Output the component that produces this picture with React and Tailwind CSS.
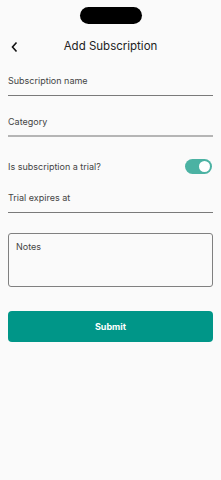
import { useState } from "react";

const label = "block text-[9px] leading-[13px] text-[#444]";

export default function App() {
  const [trial, setTrial] = useState(true);

  return (
    <div
      className="w-[221px] h-[480px] bg-[#fafafa] flex flex-col"
      style={{ fontFamily: "Inter, 'Noto Sans', sans-serif" }}
    >
      <div className="flex justify-center pt-[7px]">
        <div className="w-[62px] h-[17px] rounded-full bg-black" />
      </div>

      <div className="relative flex items-center justify-center h-[20px] mt-[13px]">
        <svg
          className="absolute left-[10px] top-[4px]"
          width="9"
          height="12"
          viewBox="0 0 9 12"
          fill="none"
          stroke="#111"
          strokeWidth="1.6"
        >
          <path d="M6.5 1.5 L2.5 6 L6.5 10.5" />
        </svg>
        <h1 className="text-[11.5px] text-[#222]">Add Subscription</h1>
      </div>

      <div className="mx-2 pt-[17px] h-[39px] border-b border-[#7a7a7a]">
        <span className={label}>Subscription name</span>
      </div>
      <div className="mx-2 pt-[19px] h-[41px] border-b-2 border-[#b5b5b5]">
        <span className={label}>Category</span>
      </div>

      <div className="mx-2 mt-[22px] h-[15px] flex items-center justify-between">
        <span className={label}>Is subscription a trial?</span>
        <button
          onClick={() => setTrial(!trial)}
          className={`w-[27px] h-[15px] rounded-full flex items-center px-[2px] mr-[1px] ${
            trial ? "bg-[#4bb2a3] justify-end" : "bg-[#ccc] justify-start"
          }`}
        >
          <span className="w-[11px] h-[11px] rounded-full bg-white" />
        </button>
      </div>

      <div className="mx-2 pt-[17px] h-[39px] border-b border-[#7a7a7a]">
        <span className={label}>Trial expires at</span>
      </div>

      <div className="mx-2 mt-[20px] h-[54px] border border-[#808080] rounded-[3px] px-[7px] pt-[6px]">
        <span className={label}>Notes</span>
      </div>

      <button className="mx-2 mt-[24px] h-[31px] rounded-[4px] bg-[#009688] text-white text-[9px] font-bold">
        Submit
      </button>
    </div>
  );
}
